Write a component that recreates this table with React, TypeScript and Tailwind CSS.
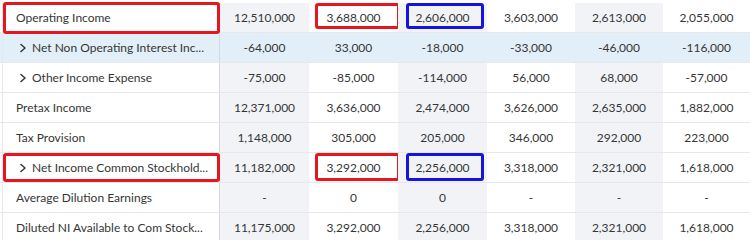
type Row = {
  label: string
  values: string[]
  child?: boolean
  highlight?: boolean
  marked?: boolean
}

const rows: Row[] = [
  { label: "Operating Income", values: ["12,510,000", "3,688,000", "2,606,000", "3,603,000", "2,613,000", "2,055,000"], marked: true },
  { label: "Net Non Operating Interest Inc...", values: ["-64,000", "33,000", "-18,000", "-33,000", "-46,000", "-116,000"], child: true, highlight: true },
  { label: "Other Income Expense", values: ["-75,000", "-85,000", "-114,000", "56,000", "68,000", "-57,000"], child: true },
  { label: "Pretax Income", values: ["12,371,000", "3,636,000", "2,474,000", "3,626,000", "2,635,000", "1,882,000"] },
  { label: "Tax Provision", values: ["1,148,000", "305,000", "205,000", "346,000", "292,000", "223,000"] },
  { label: "Net Income Common Stockhold...", values: ["11,182,000", "3,292,000", "2,256,000", "3,318,000", "2,321,000", "1,618,000"], child: true, marked: true },
  { label: "Average Dilution Earnings", values: ["-", "0", "0", "-", "-", "-"] },
  { label: "Diluted NI Available to Com Stock...", values: ["11,175,000", "3,292,000", "2,256,000", "3,318,000", "2,321,000", "1,618,000"] },
]

function Chevron() {
  return (
    <svg width="6" height="10" viewBox="0 0 6 10" className="ml-[4px] mr-[6px] shrink-0">
      <polyline points="1,1.5 5,5 1,8.5" fill="none" stroke="#3a3a3a" strokeWidth="1.6" strokeLinecap="round" strokeLinejoin="round" />
    </svg>
  )
}

export default function App() {
  return (
    <div className="w-[750px] h-[240px] overflow-hidden bg-white pt-[3px] text-[12px] text-[#363636] font-['Lato',sans-serif]">
      {rows.map((row, i) => (
        <div
          key={i}
          className={`grid grid-cols-[220px_89px_89px_89px_88px_88px_87px] h-[30px] border-b border-[#e6e8eb] ${row.highlight ? "bg-[#e2eff9]" : ""}`}
        >
          <div className="relative flex items-center ml-[2px] border-l border-[#e6e8eb] border-r border-r-[#d5d8dc] pl-[13px]">
            {row.child && <Chevron />}
            <span className="whitespace-nowrap">{row.label}</span>
            {row.marked && (
              <div className={`absolute left-[0px] right-[-1px] border-[3px] border-[#e5161d] rounded-[3px] ${i === 0 ? "top-[-1px] bottom-[-2px]" : "top-0 bottom-0"}`} />
            )}
          </div>
          {row.values.map((v, j) => (
            <div
              key={j}
              className={`relative flex items-center justify-center ${!row.highlight && j % 2 === 0 ? "bg-[#f1f3f6]" : ""}`}
            >
              {v}
              {row.marked && j === 1 && (
                <div className={`absolute left-[6px] right-[-2px] border-[3px] border-[#e5161d] rounded-[3px] ${i === 0 ? "top-0 bottom-[3px]" : "top-0 bottom-[1px]"}`} />
              )}
              {row.marked && j === 2 && (
                <div className={`absolute left-[8px] right-[3px] border-[3px] border-[#1414dc] rounded-[3px] ${i === 0 ? "top-0 bottom-[3px]" : "top-0 bottom-[1px]"}`} />
              )}
            </div>
          ))}
        </div>
      ))}
    </div>
  )
}
